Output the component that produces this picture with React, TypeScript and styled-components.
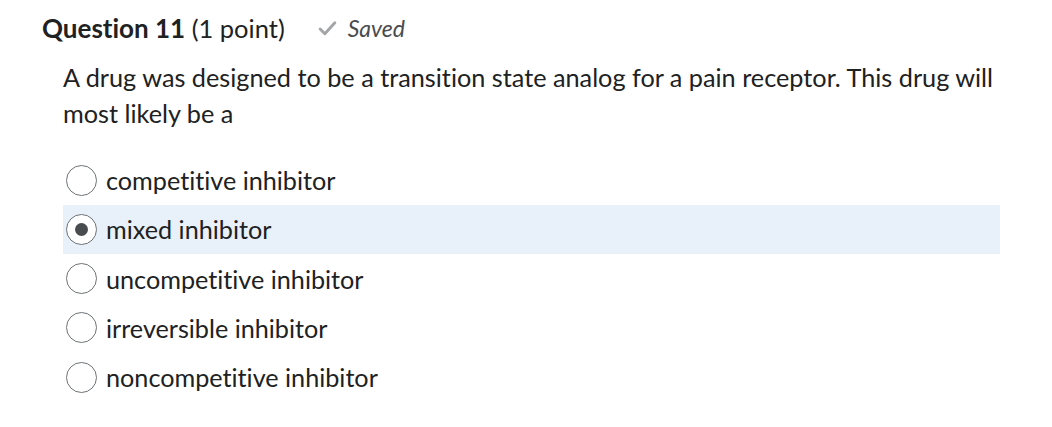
import styled, { createGlobalStyle } from "styled-components";

const options = [
  "competitive inhibitor",
  "mixed inhibitor",
  "uncompetitive inhibitor",
  "irreversible inhibitor",
  "noncompetitive inhibitor",
];
const selected = 1;

export default function App() {
  return (
    <Page>
      <GlobalStyle />
      <Header>
        <Title>
          <strong>Question 11</strong> (1 point)
        </Title>
        <Status>
          <svg viewBox="0 0 20 20" width="21" height="21">
            <path
              d="M3 10.5 L7.5 15 L17 4.5"
              fill="none"
              stroke="#a3a5a7"
              strokeWidth="2.8"
              strokeLinecap="round"
              strokeLinejoin="round"
            />
          </svg>
          <span>Saved</span>
        </Status>
      </Header>
      <Body>
        <Prompt>
          A drug was designed to be a transition state analog for a pain receptor. This drug will
          most likely be a
        </Prompt>
        <Choices>
          {options.map((o, i) => (
            <Choice key={o} $active={i === selected}>
              <Radio $checked={i === selected} />
              <span>{o}</span>
            </Choice>
          ))}
        </Choices>
      </Body>
    </Page>
  );
}

const GlobalStyle = createGlobalStyle`
  body {
    margin: 0;
    background: #ffffff;
    font-family: Lato, "Noto Sans", sans-serif;
    font-variant-ligatures: none;
    color: #202122;
  }
`;

const Page = styled.div`
  width: 1052px;
  height: 427px;
  padding: 11px 0 0 42px;
  box-sizing: border-box;
`;

const Header = styled.div`
  display: flex;
  align-items: center;
  gap: 32px;
  height: 34px;
`;

const Title = styled.div`
  font-size: 25.5px;
  color: #202122;
  strong {
    font-weight: 700;
    font-size: 26px;
  }
`;

const Status = styled.div`
  display: flex;
  align-items: center;
  gap: 10px;
  font-size: 23px;
  font-style: italic;
  color: #494c4e;
  svg {
    display: block;
  }
`;

const Body = styled.div`
  padding-left: 21px;
  width: 937px;
`;

const Prompt = styled.p`
  margin: 14px 0 0 0;
  font-size: 25.25px;
  line-height: 36px;
  color: #202122;
`;

const Choices = styled.div`
  margin-top: 25px;
  display: flex;
  flex-direction: column;
  gap: 1px;
`;

const Choice = styled.label<{ $active: boolean }>`
  display: flex;
  align-items: center;
  gap: 9px;
  height: 48.25px;
  padding-left: 3px;
  font-size: 25.2px;
  color: #202122;
  background: ${(p) => (p.$active ? "#e8f0fa" : "transparent")};
`;

const Radio = styled.span<{ $checked: boolean }>`
  width: 31px;
  height: 31px;
  box-sizing: border-box;
  border-radius: 50%;
  border: 1px solid #6e7376;
  background: #ffffff;
  display: flex;
  align-items: center;
  justify-content: center;
  &::after {
    content: "";
    display: ${(p) => (p.$checked ? "block" : "none")};
    width: 13px;
    height: 13px;
    border-radius: 50%;
    background: #494c4e;
  }
`;
